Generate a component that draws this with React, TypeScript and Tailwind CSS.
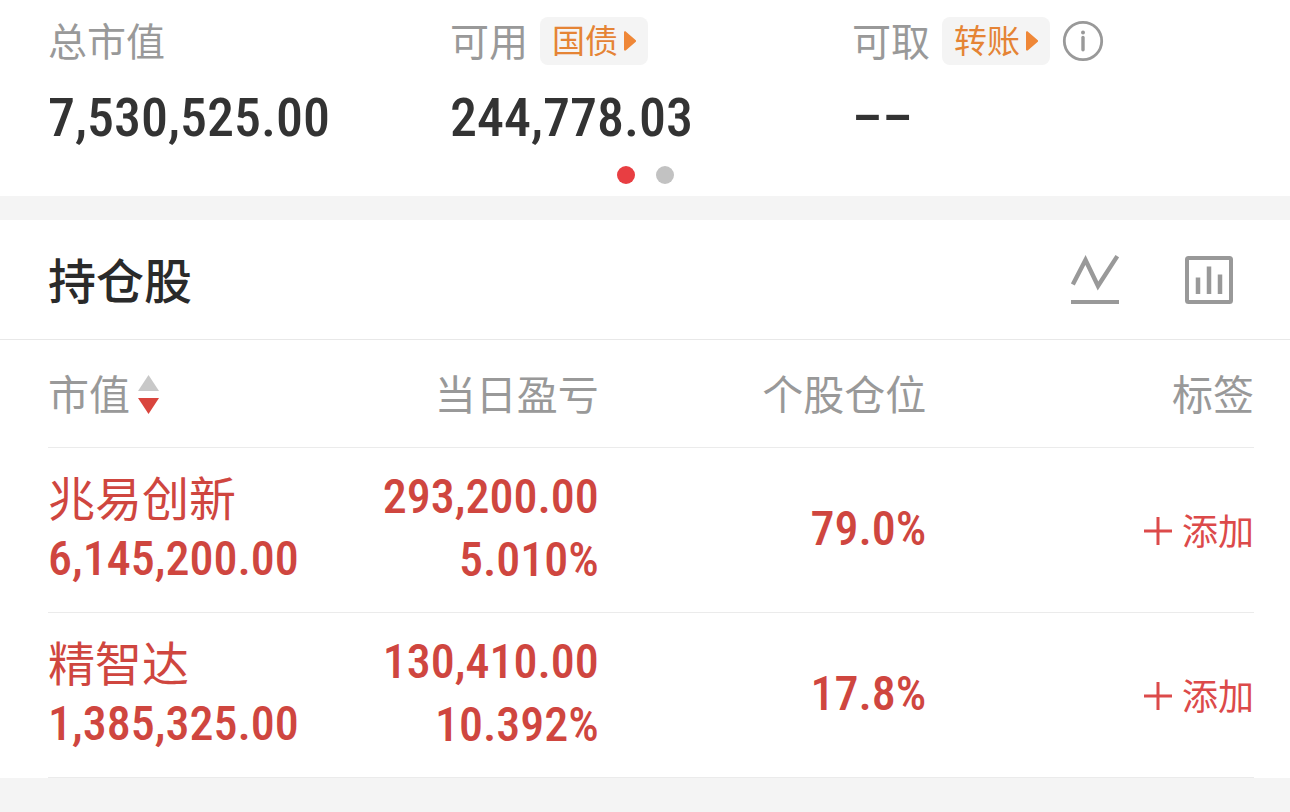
import type { ReactNode } from 'react';

const holdings = [
  { name: '兆易创新', value: '6,145,200.00', profit: '293,200.00', rate: '5.010%', position: '79.0%' },
  { name: '精智达', value: '1,385,325.00', profit: '130,410.00', rate: '10.392%', position: '17.8%' },
];

function Stat({ label, value, children }: { label: string; value: string; children?: ReactNode }) {
  return (
    <div>
      <div className="flex items-center gap-3 h-12">
        <span className="pb-1 text-[39px] leading-[44px] text-[#999999]">{label}</span>
        {children}
      </div>
      <p className="mt-[21px] font-['Roboto_Condensed',Roboto,sans-serif] font-medium text-[54px] leading-[64px] text-[#333333]">{value}</p>
    </div>
  );
}

function LinkButton({ label }: { label: string }) {
  return (
    <button type="button" className="flex items-center gap-1.5 h-12 px-3 rounded-lg bg-[#f4f4f4] text-[33px] leading-[44px] text-[#e58435]">
      <span className="pb-1">{label}</span>
      <svg width="12" height="20" viewBox="0 0 12 20" fill="#ef8737" aria-hidden="true">
        <path d="M0 1.5C0 .3 1.2 0 2 .8L11.5 9a1.3 1.3 0 0 1 0 2L2 19.2c-.8.8-2 .5-2-.7z" />
      </svg>
    </button>
  );
}

function AddButton() {
  return (
    <button type="button" className="inline-flex items-center gap-2.5 text-[36px] leading-[48px] text-[#dc4a4a]">
      <svg width="28" height="28" viewBox="0 0 28 28" stroke="currentColor" strokeWidth="3" aria-hidden="true">
        <path d="M0 14h28M14 0v28" />
      </svg>
      <span className="pb-1">添加</span>
    </button>
  );
}

export default function App() {
  return (
    <div className="min-h-screen bg-[#f4f4f4] font-['Noto_Sans_CJK_SC',sans-serif] whitespace-nowrap">
      {/* Account summary */}
      <section className="bg-white pt-[17px] pb-3">
        <div className="grid grid-cols-3 pl-12 pr-9">
          <Stat label="总市值" value="7,530,525.00" />
          <Stat label="可用" value="244,778.03">
            <LinkButton label="国债" />
          </Stat>
          <Stat label="可取" value="––">
            <LinkButton label="转账" />
            <button type="button" aria-label="说明">
              <svg width="42" height="42" viewBox="0 0 42 42" fill="none" stroke="#999999" aria-hidden="true">
                <circle cx="21" cy="21" r="18.7" strokeWidth="2.8" />
                <path d="M21 17.5v12.3" strokeWidth="3.4" strokeLinecap="round" />
                <circle cx="21" cy="12.6" r="2" fill="#999999" stroke="none" />
              </svg>
            </button>
          </Stat>
        </div>
        <div className="flex justify-center gap-[21px] mt-4">
          <span className="size-[18px] rounded-full bg-[#e83e42]" />
          <span className="size-[18px] rounded-full bg-[#c2c2c2]" />
        </div>
      </section>

      {/* Holdings */}
      <section className="mt-6 bg-white">
        <div className="flex items-center justify-between h-[120px] pl-12 pr-[57px] border-b border-[#e8e8e8]">
          <h2 className="pb-1 text-[48px] leading-[64px] font-medium text-[#2a2a2a]">持仓股</h2>
          <div className="flex items-center gap-[66px]">
            <button type="button" aria-label="走势">
              <svg className="block" width="48" height="50" viewBox="0 0 48 50" fill="none" stroke="#999999" strokeWidth="4" aria-hidden="true">
                <path d="M1.8 29.5 14.5 5 27 31 46.3 1.2" strokeWidth="4.4" />
                <path d="M0 47h48" />
              </svg>
            </button>
            <button type="button" aria-label="统计">
              <svg className="block" width="48" height="48" viewBox="0 0 48 48" fill="none" stroke="#999999" strokeWidth="4" aria-hidden="true">
                <rect x="2" y="2" width="44" height="44" rx="1.5" />
                <path d="M13 21.5V38M24 10.5V38M35 18.5V38" strokeWidth="4.5" />
              </svg>
            </button>
          </div>
        </div>

        <div className="pl-12 pr-9">
          <table className="w-full table-fixed border-separate border-spacing-0">
            <thead>
              <tr className="h-[108px] text-[41px] leading-[56px] text-[#999999]">
                <th className="w-[23%] border-b border-[#ebebeb] font-normal text-left">
                  <button type="button" className="flex items-center gap-2">
                    <span className="pb-1">市值</span>
                    <svg width="21" height="40" viewBox="0 0 21 40" aria-hidden="true">
                      <path d="M10.5 1 21 17H0z" fill="#c8c8c8" />
                      <path d="M0 24h21L10.5 40z" fill="#d9453d" />
                    </svg>
                  </button>
                </th>
                <th className="w-[23%] border-b border-[#ebebeb] pr-1 pb-1 font-normal text-right">当日盈亏</th>
                <th className="w-[27%] border-b border-[#ebebeb] pr-0.5 pb-1 font-normal text-right">个股仓位</th>
                <th className="w-[27%] border-b border-[#ebebeb] pb-1 font-normal text-right">标签</th>
              </tr>
            </thead>
            <tbody>
              {holdings.map((item) => (
                <tr key={item.name} className="h-[165px] text-[#cf463f]">
                  <td className="border-b border-[#ebebeb] pb-1">
                    <p className="text-[47px] leading-[62px]">{item.name}</p>
                    <p className="font-['Roboto_Condensed',Roboto,sans-serif] font-medium text-[48px] leading-[64px]">{item.value}</p>
                  </td>
                  <td className="border-b border-[#ebebeb] pr-1 pb-1 text-right font-['Roboto_Condensed',Roboto,sans-serif] font-medium text-[48px] leading-[63px]">
                    <p>{item.profit}</p>
                    <p>{item.rate}</p>
                  </td>
                  <td className="border-b border-[#ebebeb] pr-0.5 pb-1 text-right font-['Roboto_Condensed',Roboto,sans-serif] font-medium text-[48px] leading-[63px]">{item.position}</td>
                  <td className="border-b border-[#ebebeb] pt-0.5 text-right">
                    <AddButton />
                  </td>
                </tr>
              ))}
            </tbody>
          </table>
        </div>
      </section>
    </div>
  );
}
